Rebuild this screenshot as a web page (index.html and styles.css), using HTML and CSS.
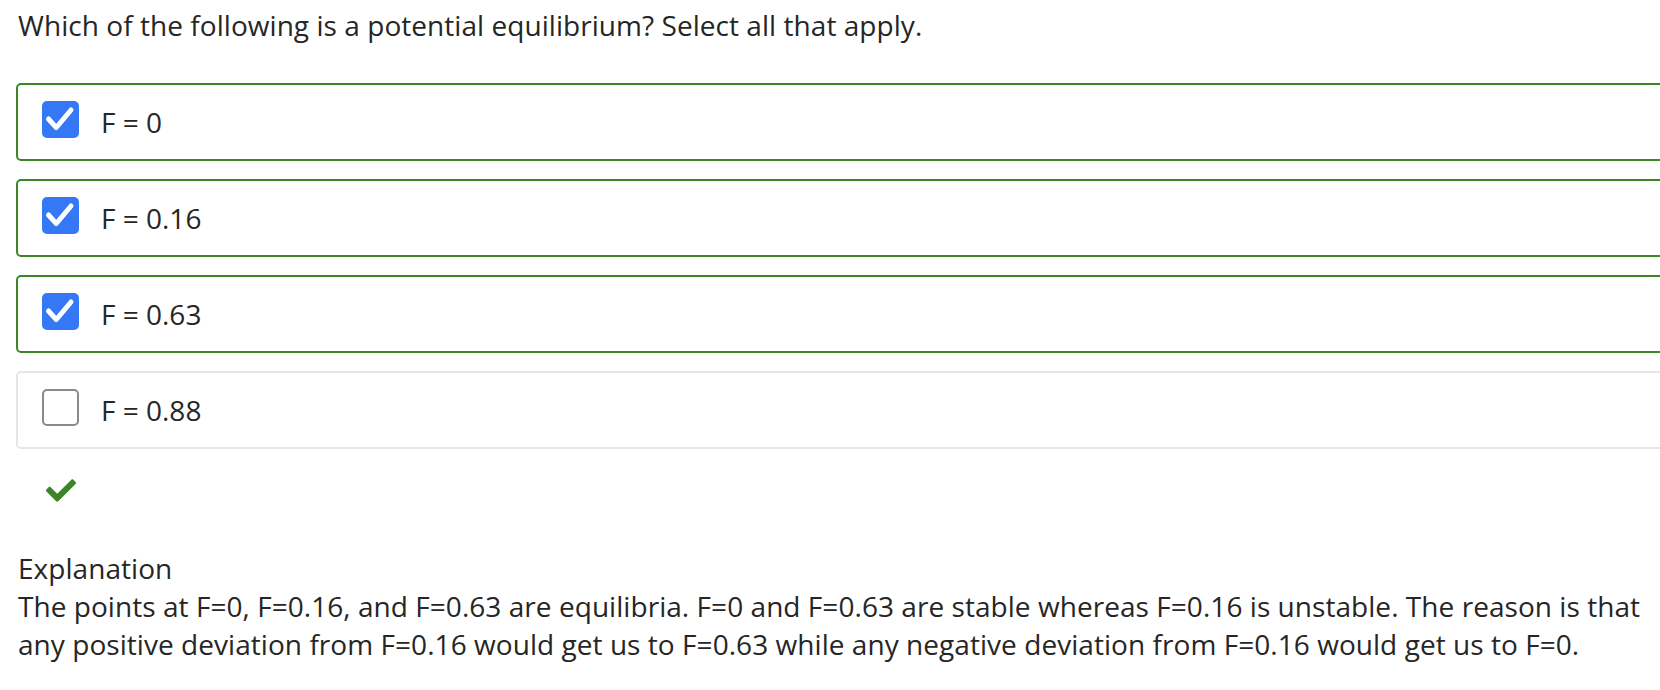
FILE: index.html
```html
<!DOCTYPE html>
<html lang="en">
<head>
<meta charset="utf-8">
<title>Question</title>
<link rel="stylesheet" href="styles.css">
</head>
<body>
<div class="page">
  <p class="question">Which of the following is a potential equilibrium? Select all that apply.</p>

  <div class="options">
    <label class="option correct">
      <span class="box checked">
        <svg viewBox="0 0 37 37" width="37" height="37"><polyline points="6.5,18 14.3,26.5 29,9" fill="none" stroke="#fff" stroke-width="5" stroke-linecap="round" stroke-linejoin="round"/></svg>
      </span>
      <span class="text">F = 0</span>
    </label>
    <label class="option correct">
      <span class="box checked">
        <svg viewBox="0 0 37 37" width="37" height="37"><polyline points="6.5,18 14.3,26.5 29,9" fill="none" stroke="#fff" stroke-width="5" stroke-linecap="round" stroke-linejoin="round"/></svg>
      </span>
      <span class="text">F = 0.16</span>
    </label>
    <label class="option correct">
      <span class="box checked">
        <svg viewBox="0 0 37 37" width="37" height="37"><polyline points="6.5,18 14.3,26.5 29,9" fill="none" stroke="#fff" stroke-width="5" stroke-linecap="round" stroke-linejoin="round"/></svg>
      </span>
      <span class="text">F = 0.63</span>
    </label>
    <label class="option">
      <span class="box"></span>
      <span class="text">F = 0.88</span>
    </label>
  </div>

  <div class="result">
    <svg viewBox="0 65 512 382" width="30" height="23"><path fill="#3b8527" d="M173.898 439.404l-166.4-166.4c-9.997-9.997-9.997-26.206 0-36.204l36.203-36.204c9.997-9.998 26.207-9.998 36.204 0L192 312.69 432.095 72.596c9.997-9.997 26.207-9.997 36.204 0l36.203 36.204c9.997 9.997 9.997 26.206 0 36.204l-294.4 294.401c-9.998 9.997-26.207 9.997-36.204-.001z"/></svg>
  </div>

  <div class="explanation">
    <div class="exp-title">Explanation</div>
    <div class="exp-body">The points at F=0, F=0.16, and F=0.63 are equilibria. F=0 and F=0.63 are stable whereas F=0.16 is unstable. The reason is that any positive deviation from F=0.16 would get us to F=0.63 while any negative deviation from F=0.16 would get us to F=0.</div>
  </div>
</div>
</body>
</html>
```

FILE: styles.css
```css
html {
  overflow: hidden;
  background: #fff;
}

body {
  margin: 0;
  font-family: "Open Sans", "DejaVu Sans", sans-serif;
  font-size: 28px;
  color: #262626;
}

.page {
  width: 1720px;
  padding: 6px 0 0 16px;
}

.question {
  margin: 0 0 39px 2px;
  line-height: 38px;
  letter-spacing: 0.05px;
}

.options {
  display: flex;
  flex-direction: column;
  gap: 18px;
}

.option {
  box-sizing: border-box;
  height: 78px;
  display: flex;
  align-items: center;
  padding-left: 24px;
  border: 2px solid #e6e6e6;
  border-radius: 5px;
  background: #fff;
}

.option.correct {
  border-color: #3a8726;
}

.box {
  box-sizing: border-box;
  width: 37px;
  height: 37px;
  margin-top: -6px;
  border: 2px solid #8a8a8a;
  border-radius: 5px;
  background: #fff;
  flex: none;
  display: flex;
}

.box.checked {
  border: none;
  background: #3478f6;
}

.text {
  margin-left: 22px;
  line-height: 38px;
}

.result {
  height: 23px;
  margin: 30px 0 0 30px;
  display: flex;
}

.explanation {
  margin: 47px 0 0 2px;
  width: 1650px;
  line-height: 38px;
  letter-spacing: 0.05px;
}
```
